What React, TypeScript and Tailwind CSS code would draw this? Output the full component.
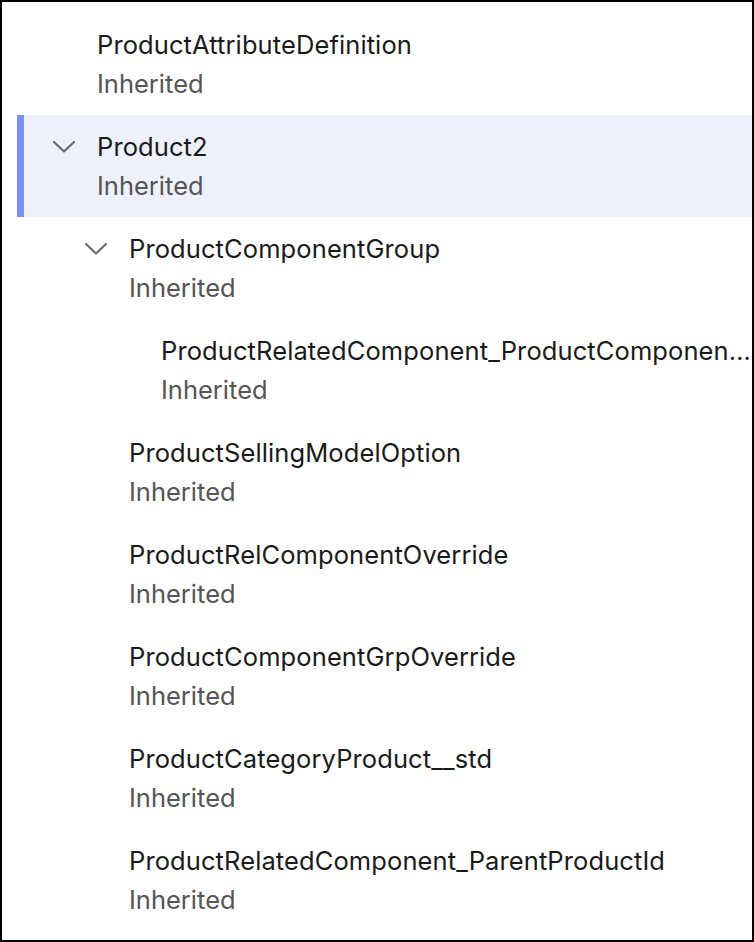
import { useState } from "react";

interface TreeNode {
  id: string;
  label: string;
  level: number;
  expandable?: boolean;
}

const nodes: TreeNode[] = [
  { id: "pad", label: "ProductAttributeDefinition", level: 0 },
  { id: "p2", label: "Product2", level: 0, expandable: true },
  { id: "pcg", label: "ProductComponentGroup", level: 1, expandable: true },
  { id: "prc-pc", label: "ProductRelatedComponent_ProductComponentGroupId", level: 2 },
  { id: "psmo", label: "ProductSellingModelOption", level: 1 },
  { id: "prco", label: "ProductRelComponentOverride", level: 1 },
  { id: "pcgo", label: "ProductComponentGrpOverride", level: 1 },
  { id: "pcp", label: "ProductCategoryProduct__std", level: 1 },
  { id: "prc-pp", label: "ProductRelatedComponent_ParentProductId", level: 1 },
];

const indent = ["pl-[35px]", "pl-[67px]", "pl-[99px]"];

function Chevron() {
  return (
    <svg width="24" height="14" viewBox="0 0 24 14" fill="none">
      <polyline
        points="2,2 12,11.5 22,2"
        stroke="#6b6b6b"
        strokeWidth="2.2"
        strokeLinecap="round"
        strokeLinejoin="round"
      />
    </svg>
  );
}

export default function App() {
  const [selected, setSelected] = useState("p2");

  return (
    <div
      className="h-[942px] w-[754px] border-2 border-black bg-white pt-[11px] overflow-hidden"
      style={{ fontFamily: "Inter, 'Noto Sans', sans-serif" }}
    >
      <ul className="ml-[15px]">
        {nodes.map((node) => {
          const isSelected = node.id === selected;
          return (
            <li
              key={node.id}
              onClick={() => setSelected(node.id)}
              className={`relative flex h-[102px] items-start py-3 pr-0 ${indent[node.level]} ${
                isSelected ? "bg-[#eef1fb]" : ""
              }`}
            >
              {isSelected && (
                <span className="absolute left-0 top-0 h-full w-[7px] bg-[#7b8ef2]" />
              )}
              <span className="flex h-[39px] w-[24px] shrink-0 items-center justify-center">
                {node.expandable && <Chevron />}
              </span>
              <div className="ml-[21px] min-w-0 flex-1">
                <div className="truncate text-[25.5px] leading-[39px] tracking-[0.1px] text-[#1a1a1a]">
                  {node.label}
                </div>
                <div className="text-[25.5px] leading-[39px] text-[#555555]">Inherited</div>
              </div>
            </li>
          );
        })}
      </ul>
    </div>
  );
}
